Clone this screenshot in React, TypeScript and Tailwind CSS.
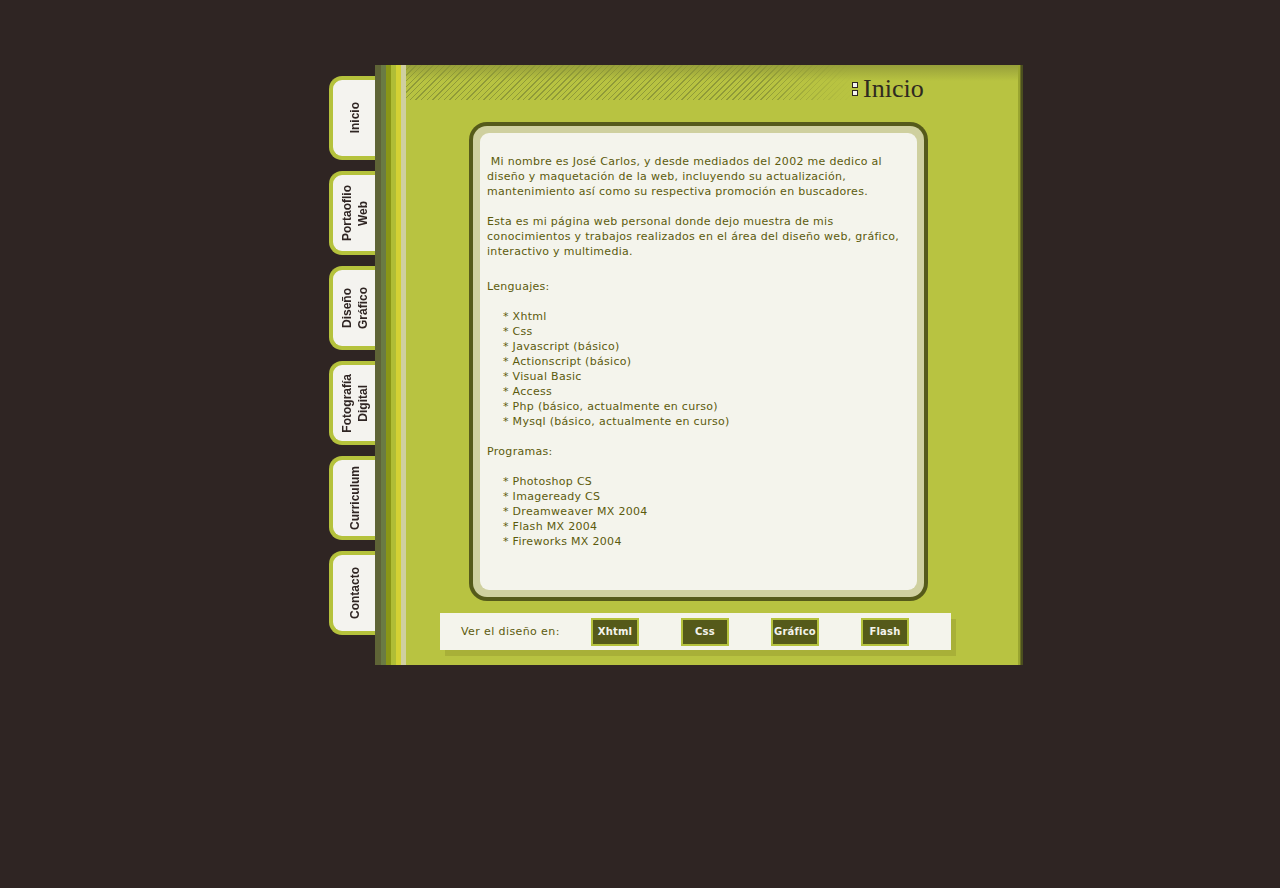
import React from "react";

const tabs: string[][] = [
  ["Inicio"],
  ["Portaoflio", "Web"],
  ["Diseño", "Gráfico"],
  ["Fotografía", "Digital"],
  ["Curriculum"],
  ["Contacto"],
];

const intro = [
  " Mi nombre es José Carlos, y desde mediados del 2002 me dedico al",
  "diseño y maquetación de la web, incluyendo su actualización,",
  "mantenimiento así como su respectiva promoción en buscadores.",
];

const intro2 = [
  "Esta es mi página web personal donde dejo muestra de mis",
  "conocimientos y trabajos realizados en el área del diseño web, gráfico,",
  "interactivo y multimedia.",
];

const lenguajes = [
  "Xhtml",
  "Css",
  "Javascript (básico)",
  "Actionscript (básico)",
  "Visual Basic",
  "Access",
  "Php (básico, actualmente en curso)",
  "Mysql (básico, actualmente en curso)",
];

const programas = [
  "Photoshop CS",
  "Imageready CS",
  "Dreamweaver MX 2004",
  "Flash MX 2004",
  "Fireworks MX 2004",
];

function Tab({ lines }: { lines: string[] }) {
  return (
    <a
      href="#"
      className="flex h-[84px] w-[46px] items-center justify-center rounded-l-[13px] border-[4px] border-r-0 border-[#b5c23c] bg-[#f4f3ef] pl-[2px]"
    >
      <span className="rotate-180 text-center text-[12px] leading-[16px] font-bold text-[#2f2523] [writing-mode:vertical-rl] [font-family:'Liberation_Sans',Arial,sans-serif]">
        {lines.map((l, i) => (
          <span key={i} className="block">
            {l}
          </span>
        ))}
      </span>
    </a>
  );
}

function List({ items }: { items: string[] }) {
  return (
    <ul className="pl-[16px]">
      {items.map((t) => (
        <li key={t} className="whitespace-pre">
          {"* " + t}
        </li>
      ))}
    </ul>
  );
}

export default function App() {
  return (
    <div className="min-h-[888px] bg-[#2f2523] pt-[65px] pl-[329px]">
      <div className="flex items-start">
        {/* pestañas */}
        <nav className="mt-[11px] flex flex-col gap-[11px]">
          {tabs.map((t) => (
            <Tab key={t[0]} lines={t} />
          ))}
        </nav>

        {/* panel principal */}
        <div className="flex h-[600px] w-[648px]">
          <div className="w-[6px] bg-[#5f6436]" />
          <div className="w-[5px] bg-[#6a7b44]" />
          <div className="w-[5px] bg-[#8a9616]" />
          <div className="w-[5px] bg-[#afbd36]" />
          <div className="w-[5px] bg-[#d3d134]" />
          <div className="w-[5px] bg-[#cfcfa0]" />

          <div className="flex flex-1 flex-col bg-[#b8c341] bg-[linear-gradient(to_bottom,#97a03a,#b8c341_16px)]">
            <div className="flex h-[35px] items-start">
              <div className="h-[35px] w-[446px] bg-[repeating-linear-gradient(135deg,transparent_0_3px,#8f9a38_3px_4px)] [mask-image:linear-gradient(to_right,black_80%,transparent)]" />
              <div className="mt-[11px] flex items-center gap-[5px]">
                <span className="flex flex-col gap-[2px]">
                  <span className="block h-[6px] w-[6px] border border-[#2f2523] bg-[#f4f3ef]" />
                  <span className="block h-[6px] w-[6px] border border-[#2f2523] bg-[#f4f3ef]" />
                </span>
                <span className="text-[26px] leading-none text-[#2f2a20] [font-family:'Liberation_Serif','Times_New_Roman',serif]">
                  Inicio
                </span>
              </div>
            </div>

            <div className="ml-[63px] mt-[22px] h-[479px] w-[459px] rounded-[18px] bg-[#555a1a] p-[4px]">
              <div className="h-full rounded-[14px] bg-[#cfd09f] p-[7px]">
                <div className="h-full rounded-[9px] bg-[#f4f4ec] pl-[7px] pt-[21px] text-[11px] leading-[15px] tracking-[0.3px] text-[#5c5b0c] [font-family:'DejaVu_Sans',Verdana,sans-serif]">
                  <p className="whitespace-pre">{intro.join("\n")}</p>
                  <p className="mt-[15px] whitespace-pre">{intro2.join("\n")}</p>
                  <p className="mt-[20px]">Lenguajes:</p>
                  <div className="mt-[15px]">
                    <List items={lenguajes} />
                  </div>
                  <p className="mt-[15px]">Programas:</p>
                  <div className="mt-[15px]">
                    <List items={programas} />
                  </div>
                </div>
              </div>
            </div>

            <div className="ml-[34px] mt-[12px] flex h-[37px] w-[511px] items-center bg-[#f4f4ec] pt-[2px] shadow-[5px_6px_0_#a8b038]">
              <span className="ml-[21px] w-[130px] text-[11px] tracking-[0.4px] text-[#5c5b0c] [font-family:'DejaVu_Sans',Verdana,sans-serif]">
                Ver el diseño en:
              </span>
              <div className="-mt-[2px] flex gap-[42px]">
                {["Xhtml", "Css", "Gráfico", "Flash"].map((b) => (
                  <a
                    key={b}
                    href="#"
                    className="flex h-[28px] w-[48px] items-center justify-center border-2 border-[#b5c23c] bg-[#555a1a] text-[10px] font-bold tracking-[0.2px] text-[#f4f4ec] [font-family:'DejaVu_Sans',Verdana,sans-serif]"
                  >
                    {b}
                  </a>
                ))}
              </div>
            </div>
          </div>

          <div className="w-[2px] bg-[#9aa530]" />
          <div className="w-[1px] bg-[#6b7024]" />
          <div className="w-[2px] bg-[#4b4f1e]" />
        </div>
      </div>
    </div>
  );
}
